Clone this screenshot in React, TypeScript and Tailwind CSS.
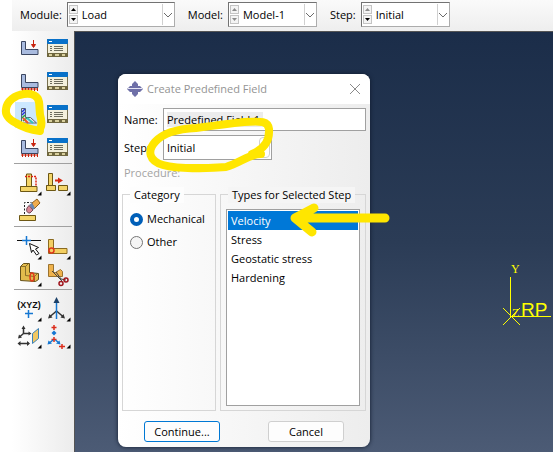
import type { ReactNode } from 'react';

const yellow = '#ffe600';

function Chevron() {
  return (
    <svg className="h-2 w-2.5" viewBox="0 0 10 8" fill="none" stroke="#6b6b6b">
      <path d="M1 2l4 4 4-4" />
    </svg>
  );
}

interface ContextSelectProps {
  id: string;
  label: string;
  value: string;
  width: string;
  upDisabled?: boolean;
  downDisabled?: boolean;
}

function ContextSelect({ id, label, value, width, upDisabled, downDisabled }: ContextSelectProps) {
  return (
    <div className="flex items-center gap-[5px]">
      <label htmlFor={id}>{label}</label>
      <div className={`flex h-[25px] items-stretch border border-[#acacac] border-t-[#727272] border-l-[#727272] bg-white p-px ${width}`}>
        <div className="flex w-[9px] shrink-0 flex-col justify-between py-px">
          <button
            type="button"
            aria-label={`Previous ${id}`}
            disabled={upDisabled}
            className="flex h-[9px] items-center justify-center border border-[#c4c4c4] bg-[#f4f4f4] text-black disabled:text-[#8a8a8a]"
          >
            <svg className="h-[3px] w-[5px]" viewBox="0 0 5 3" fill="currentColor"><path d="M0 3L2.5 0 5 3z" /></svg>
          </button>
          <button
            type="button"
            aria-label={`Next ${id}`}
            disabled={downDisabled}
            className="flex h-[9px] items-center justify-center border border-[#c4c4c4] bg-[#f4f4f4] text-black disabled:text-[#8a8a8a]"
          >
            <svg className="h-[3px] w-[5px]" viewBox="0 0 5 3" fill="currentColor"><path d="M0 0h5L2.5 3z" /></svg>
          </button>
        </div>
        <select id={id} defaultValue={value} className="min-w-0 flex-1 appearance-none bg-white pl-1 outline-none">
          <option>{value}</option>
        </select>
        <span className="pointer-events-none flex w-[11px] items-center justify-center border-l border-[#d0d0d0]">
          <Chevron />
        </span>
      </div>
    </div>
  );
}

function Tool({ label, active, children }: { label: string; active?: boolean; children: ReactNode }) {
  return (
    <button type="button" aria-label={label} title={label} className={active ? 'h-[26px] w-7 bg-[#cce8ff]' : 'h-[26px] w-7'}>
      <svg className="h-[26px] w-7" viewBox="0 0 28 26" fill="none">
        {children}
      </svg>
    </button>
  );
}

const Flyout = () => <path d="M26.5 20.5v4h-4z" fill="#000" />;

const BlueL = () => (
  <path d="M6.5 5.5h4v8h12.5v5h-16.5z" fill="#a9bbdf" stroke="#3b4660" />
);

const Ticks = () => (
  <path d="M6 20h17M7.5 19v3M10.5 19v3M13.5 19v3M16.5 19v3M19.5 19v3M22.5 19v3" stroke="#c8220c" />
);

const RedDown = () => (
  <path d="M18.5 4v6M16.5 8.5h4l-2 3z" stroke="#c8220c" fill="#c8220c" />
);

function Manager({ label }: { label: string }) {
  return (
    <Tool label={label}>
      <rect x="3.5" y="3.5" width="20" height="17" fill="#f3f0dc" stroke="#77704f" />
      <rect x="3" y="3" width="21" height="5" rx="1" fill="#0871c9" />
      <path d="M5 5.5h3" stroke="#fff" />
      <path d="M6 10.5h2M10 10.5h9M6 12.5h2M10 12.5h9M6 14.5h2M10 14.5h9" stroke="#6c6c5c" />
      <rect x="3" y="17" width="21" height="4" fill="#6f673f" />
      <path d="M5 19h3M11 19h4M18 19h3" stroke="#d8cf9d" strokeWidth="2" />
    </Tool>
  );
}

function Toolbox() {
  return (
    <aside className="w-[62px] shrink-0 bg-linear-to-r from-white to-[#ececec] px-0.5">
      <div className="grid grid-cols-[28px_28px] gap-x-px gap-y-[7px] border-b border-[#a0a0a0] px-px pt-[5px] pb-0.5">
        <Tool label="Create Load"><BlueL /><RedDown /></Tool>
        <Manager label="Load Manager" />
        <Tool label="Create Boundary Condition"><BlueL /><Ticks /></Tool>
        <Manager label="Boundary Condition Manager" />
        <Tool label="Create Predefined Field" active>
          <path d="M6.5 6.5h4v9h5l6 5.5h-15z" fill="#e3e9f5" stroke="#59606e" />
          <path d="M7 10l3-3M7 13l3-3" stroke="#2536d8" strokeWidth="1.5" />
          <path d="M7 16l3-3M8 19l4-3" stroke="#28a446" strokeWidth="1.5" />
          <path d="M8 16l5 5" stroke="#e8552c" strokeWidth="2" />
          <path d="M12 16l6 5" stroke="#35c3bd" strokeWidth="2" />
        </Tool>
        <Manager label="Predefined Field Manager" />
        <Tool label="Create Load Case"><BlueL /><Ticks /><RedDown /></Tool>
        <Manager label="Load Case Manager" />
      </div>

      <div className="grid grid-cols-[28px_28px] gap-x-px gap-y-px border-b border-[#a0a0a0] px-px pt-[7px] pb-0.5">
        <Tool label="Partition Face">
          <path d="M11.5 3h5v12.5h5.5v5h-16.5v-5h6z" fill="#f4d569" stroke="#6d5714" />
          <path d="M5.5 15.5h16" stroke="#6d5714" />
          <path d="M10 5.5h11v9" stroke="#e02412" strokeWidth="1.5" strokeDasharray="2 1" />
          <Flyout />
        </Tool>
        <Tool label="Extend Partition">
          <path d="M4.5 2.5h4v12h3v5h-9v-5h2zM14.5 14.5h9v5h-9z" fill="#f4d569" stroke="#6d5714" />
          <path d="M2.5 14.5h9" stroke="#6d5714" />
          <path d="M11 9.5h4" stroke="#d42a14" strokeWidth="2" />
          <path d="M14 6.5l5 3-5 3z" fill="#d42a14" />
          <Flyout />
        </Tool>
        <Tool label="Remove Faces">
          <path d="M4.5 17.5h16v5h-16z" fill="#f4d569" stroke="#6d5714" />
          <path d="M9.5 16V4.5h7" stroke="#222" strokeDasharray="2 1.5" />
          <path d="M17 5l5-4 3 4-6 6z" fill="#efac4e" stroke="#8f5f1c" />
          <path d="M14 7l3-2 3 5-2 2z" fill="#6888b4" />
          <path d="M14 7.5l4 4.500-3 3c-3 0-4-2-3-5z" fill="#db8896" stroke="#754b58" />
        </Tool>
      </div>

      <div className="grid grid-cols-[28px_28px] gap-x-px gap-y-px border-b border-[#a0a0a0] px-px pt-2 pb-px">
        <Tool label="Query Point">
          <path d="M2 5.5h6M16 5.5h10" stroke="#111" />
          <path d="M7 5.5h9M11.5 1v9" stroke="#1577d2" strokeWidth="1.5" />
          <path d="M14.5 8.500l9 4-3 1.500 3.500 4.500-2.500 1.500-3.500-5-1.500 2.500z" fill="#fff" stroke="#111" />
          <Flyout />
        </Tool>
        <Tool label="Round Edge">
          <path d="M4.500 4.500h5v9h13.500v5h-18.500z" fill="#f3cf62" stroke="#8a6a20" />
          <circle cx="7.5" cy="15.5" r="2.5" stroke="#e0381a" strokeWidth="1.5" />
          <Flyout />
        </Tool>
        <Tool label="Partition Cell">
          <path d="M5.5 4.5l3-3h6v9l9 1v6l-3 2-15-1z" fill="#e2bb4c" stroke="#65501a" />
          <path d="M5.5 4.5h5v9l9 1v5M10.500 4.500l3-3M19.500 14.500l3-3" stroke="#65501a" strokeWidth="0.7" />
          <ellipse cx="17" cy="15" rx="2" ry="4" stroke="#e0381a" strokeWidth="1.5" />
          <Flyout />
        </Tool>
        <Tool label="Cut Geometry">
          <path d="M4.5 2.500h5v8h2l5-3 2 2v5h-14z" fill="#efb24d" stroke="#9a7330" />
          <path d="M8 9l10 10M12 10l5 7 5 1" stroke="#444" />
          <circle cx="17" cy="21.5" r="2" stroke="#a0141c" strokeWidth="1.5" />
          <circle cx="22" cy="18" r="2" stroke="#a0141c" strokeWidth="1.5" />
        </Tool>
      </div>

      <div className="grid grid-cols-[28px_28px] gap-x-px gap-y-px px-px pt-[7px]">
        <Tool label="Create Datum Point">
          <text x="14" y="11" textAnchor="middle" fontSize="9" fontWeight="700" fontFamily="Liberation Sans, sans-serif" fill="#111">(XYZ)</text>
          <path d="M10 16.5h8M13.5 13v8" stroke="#1577d2" strokeWidth="1.5" />
          <Flyout />
        </Tool>
        <Tool label="Create Datum Axis">
          <path d="M12.5 14l-7 6M12.5 14l7 6" stroke="#333" strokeWidth="1.5" />
          <path d="M4 21.5l1.500-4.500 3 3.500zM21 21.500l-1.500-4.500-3 3.500z" fill="#333" />
          <path d="M12.5 3v19" stroke="#1577d2" strokeWidth="1.5" />
          <path d="M12.5 0l3 6h-6z" fill="#1b4068" />
          <Flyout />
        </Tool>
        <Tool label="Create Datum Plane">
          <path d="M8.5 4v5.500h6M8.500 9.500l-4 3.500M4 19.500h10" stroke="#333" strokeWidth="1.5" />
          <path d="M8.5 1.500l2 3.500h-4zM16.500 9.500l-3-2v4zM3 14.500l1-4 3 3zM2.500 19.500l3-2.500v5zM15 19.500l-3-2.500v5z" fill="#333" />
          <path d="M17.5 9.500l6-5v10l-6 5z" fill="#f3c861" stroke="#3d82b8" />
          <Flyout />
        </Tool>
        <Tool label="Create Datum CSYS">
          <path d="M7.5 3.500h5M10 1v5M7.500 15.500h5M10 13v5M15 22.500h6M18 20v5" stroke="#db2c1a" strokeWidth="1.5" />
          <path d="M10 6.500l2.500 2.500-2.500 2.500-2.500-2.500z" fill="#1577d2" />
          <path d="M9 16l-3 2.500M11.500 16l3 2.500" stroke="#1577d2" strokeWidth="1.5" />
          <path d="M3.500 20.500l1-4 3.500 3zM16.500 20.500l-1-4-3.500 3z" fill="#1577d2" />
          <Flyout />
        </Tool>
      </div>
    </aside>
  );
}

const types = ['Velocity', 'Stress', 'Geostatic stress', 'Hardening'];

function Dialog() {
  return (
    <section
      role="dialog"
      aria-label="Create Predefined Field"
      className="absolute top-[42px] left-[43px] w-[252px] overflow-hidden rounded-lg bg-linear-to-r from-white to-[#ededed] shadow-[0_0_4px_#101a2c]"
    >
      <header className="flex h-[30px] items-center bg-white px-[9px] text-[#949494]">
        <svg className="h-4 w-4" viewBox="0 0 16 16">
          <path d="M8 0l3 3v2h2l3 3-3 3h-2v2l-3 3-3-3v-2H3L0 8l3-3h2V3z" fill="#6f70a8" />
          <path d="M1 7.5h14" stroke="#e6e6f3" />
        </svg>
        <h1 className="ml-1 flex-1">Create Predefined Field</h1>
        <button type="button" aria-label="Close">
          <svg className="h-3 w-3" viewBox="0 0 12 12" stroke="#8a8a8a" fill="none"><path d="M1 1l10 10M11 1L1 11" /></svg>
        </button>
      </header>

      <form className="px-1 pt-1 pb-[5px]">
        <div className="flex items-center pl-0.5">
          <label htmlFor="name" className="w-[39px]">Name:</label>
          <input
            id="name"
            defaultValue="Predefined Field-1"
            className="h-[23px] min-w-0 flex-1 border border-[#a0a0a0] bg-white bg-[linear-gradient(#ececec,#ececec)] bg-[length:96px_15px] bg-[position:3px_3px] bg-no-repeat px-[3px] outline-none"
          />
        </div>
        <div className="mt-1 flex items-center pl-0.5">
          <label htmlFor="step" className="w-[39px]">Step:</label>
          <div className="flex h-[25px] w-[109px] border border-[#a0a0a0] bg-white">
            <select id="step" defaultValue="Initial" className="min-w-0 flex-1 appearance-none px-[3px] outline-none">
              <option>Initial</option>
            </select>
            <span className="pointer-events-none my-px mr-px w-[11px] rounded-sm border border-[#d0d0d0]" />
          </div>
        </div>
        <p className="mt-[5px] pl-0.5 text-[#a3a3a3]">Procedure:</p>

        <div className="mt-[5px] flex gap-1">
          <fieldset className="relative mt-2 h-[217px] w-[94px] shrink-0 border border-[#d6d6d6] px-[7px] pt-4">
            <legend className="absolute -top-2 left-[7px] bg-[#fdfdfd] px-1">Category</legend>
            <div className="flex flex-col gap-[7px]">
              <label className="flex items-center gap-1">
                <input
                  type="radio"
                  name="category"
                  defaultChecked
                  className="size-[13px] shrink-0 appearance-none rounded-full border border-[#757575] bg-[#f5f5f5] checked:border-4 checked:border-[#005fb8] checked:bg-white"
                />
                Mechanical
              </label>
              <label className="flex items-center gap-1">
                <input
                  type="radio"
                  name="category"
                  className="size-[13px] shrink-0 appearance-none rounded-full border border-[#757575] bg-[#f5f5f5] checked:border-4 checked:border-[#005fb8] checked:bg-white"
                />
                Other
              </label>
            </div>
          </fieldset>
          <fieldset className="relative mt-2 h-[217px] min-w-0 flex-1 border border-[#d6d6d6] px-[5px] pt-[14px]">
            <legend className="absolute -top-2 left-[7px] bg-[#f5f5f5] px-1 whitespace-nowrap">Types for Selected Step</legend>
            <ul role="listbox" aria-label="Types for Selected Step" className="h-[197px] border border-[#a0a0a0] bg-white p-px">
              {types.map((t, i) => (
                <li
                  key={t}
                  role="option"
                  aria-selected={i === 0}
                  className={i === 0 ? 'h-[19px] bg-[#0078d7] px-[3px] leading-[19px] text-white' : 'h-[19px] px-[3px] leading-[19px]'}
                >
                  {t}
                </li>
              ))}
            </ul>
          </fieldset>
        </div>

        <div className="mt-[10px] flex justify-between px-[22px]">
          <button type="button" className="h-[21px] w-[76px] rounded-[3px] border border-[#0078d4] bg-[#fdfdfd]">Continue...</button>
          <button type="button" className="h-[21px] w-[76px] rounded-[3px] border border-[#cfcfcf] bg-[#fdfdfd]">Cancel</button>
        </div>
      </form>
    </section>
  );
}

export default function App() {
  return (
    <div className="relative flex min-h-screen flex-col overflow-hidden bg-white pl-3 font-['Open_Sans','Noto_Sans',sans-serif] text-[11px] leading-4 text-black">
      <div className="flex h-[31px] items-start gap-[13px] bg-linear-to-b from-[#fafafa] to-[#eeeeee] pt-0.5 pl-2">
        <ContextSelect id="module" label="Module:" value="Load" width="w-[108px]" />
        <ContextSelect id="model" label="Model:" value="Model-1" width="w-[89px]" upDisabled downDisabled />
        <ContextSelect id="context-step" label="Step:" value="Initial" width="w-[89px]" upDisabled />
      </div>

      <div className="flex flex-1">
        <Toolbox />
        <main className="relative min-w-0 flex-1 border-t border-l border-[#555] bg-linear-to-b from-[#1b2d49] via-[#2b3c56] to-[#4c5b75]">
          {/* reference point and triad */}
          <svg className="absolute top-[228px] left-[426px] h-[70px] w-[54px]" viewBox="0 0 54 70" fill="none" stroke="#ff0">
            <path d="M9.5 17v39.5H50" shapeRendering="crispEdges" />
            <path d="M2 48l17 17M19 48L2 65" />
            <g fill="#ff0" stroke="none">
              <text x="10" y="13" fontSize="12" fontFamily="Liberation Serif, serif">Y</text>
              <text x="11" y="57" fontSize="12" fontFamily="Liberation Serif, serif">Z</text>
              <text x="20" y="56" fontSize="19" fontFamily="Liberation Sans, sans-serif">RP</text>
            </g>
          </svg>
          <Dialog />
        </main>
      </div>

      {/* highlighter marks */}
      <svg className="pointer-events-none absolute top-0 left-0 h-[260px] w-[400px]" viewBox="0 0 400 260" fill="none" stroke={yellow} strokeLinecap="round" strokeLinejoin="round">
        <path strokeWidth="8" d="M40 131C33 130 24 128 16 123C8 119 5 115 6 109C7 101 15 95 24 94C32 93 38 96 39 102C40 108 39 113 41 119C42 124 42 127 39 130" />
        <path strokeWidth="8" d="M252 154C262 150 270 143 269 129C268 121 262 121 244 122C226 124 211 126 196 128C176 129 163 133 155 142C147 151 149 161 163 165C181 170 208 168 226 167C240 163 249 154 261 154" />
        <path strokeWidth="9" d="M295 218H385M314 208L295 218L312 232" />
        <path d="M293 218l12-7v14z" fill={yellow} />
      </svg>
    </div>
  );
}
